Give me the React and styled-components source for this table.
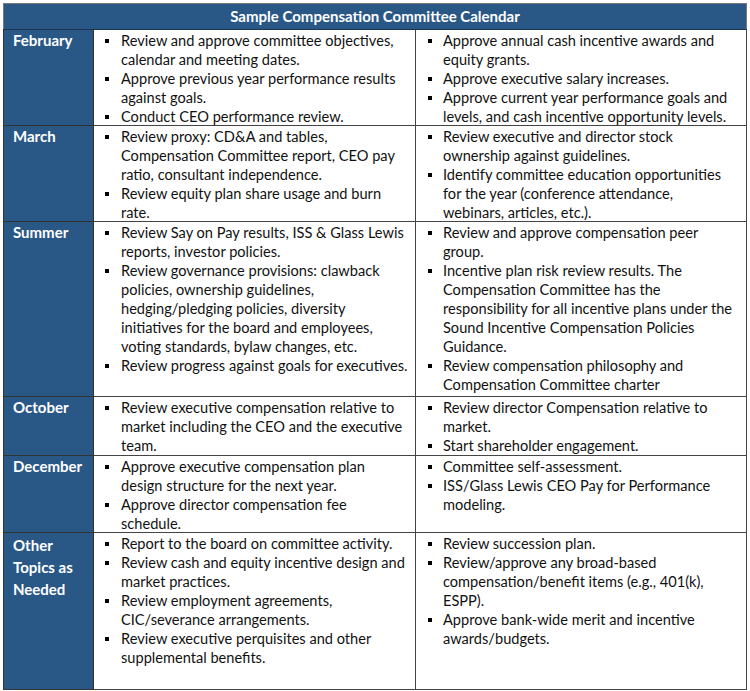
import React from "react";
import styled, { createGlobalStyle } from "styled-components";

const Global = createGlobalStyle`
  html, body { margin: 0; padding: 0; background: #ffffff; }
  body { font-family: Lato, "Open Sans", "Liberation Sans", sans-serif; }
`;

const Page = styled.div`
  padding: 3px 0 0 3px;
`;

const Table = styled.table`
  width: 743px;
  border-collapse: collapse;
  table-layout: fixed;
  border: 1.5px solid #7a7a7a;
  font-size: 14.6px;
  line-height: 19px;
  color: #111;
`;

const HeadCell = styled.th`
  background: #2a5886;
  color: #ffffff;
  font-weight: 700;
  font-size: 15px;
  text-align: center;
  height: 25px;
  padding: 0;
  border-bottom: 1px solid #1d3550;
`;

const Label = styled.td`
  background: #2a5886;
  color: #ffffff;
  font-weight: 700;
  font-size: 15px;
  vertical-align: top;
  padding: 1px 0 0 9px;
  border: 1px solid #333;
  height: ${(p) => p.$h}px;
  box-sizing: border-box;
`;

const ListCell = styled.td`
  vertical-align: top;
  padding: 1px 0 0 0;
  border: 1px solid #444;
`;

const List = styled.ul`
  list-style: none;
  margin: 0 0 -1px;
  padding: 0;
`;

const Item = styled.li`
  position: relative;
  padding-left: ${(p) => p.$indent}px;
  &::before {
    content: "";
    position: absolute;
    left: ${(p) => p.$bullet}px;
    top: 8px;
    width: 4px;
    height: 4px;
    background: #000;
  }
`;

const Line = styled.span`
  display: block;
  white-space: nowrap;
`;

const LabelLine = styled.span`
  display: block;
  line-height: ${(p) => p.$lh || 19}px;
`;

const rows = [
  {
    label: ["February"],
    h: 96,
    left: [
      ["Review and approve committee objectives,", "calendar and meeting dates."],
      ["Approve previous year performance results", "against goals."],
      ["Conduct CEO performance review."],
    ],
    right: [
      ["Approve annual cash incentive awards and", "equity grants."],
      ["Approve executive salary increases."],
      ["Approve current year performance goals and", "levels, and cash incentive opportunity levels."],
    ],
  },
  {
    label: ["March"],
    h: 96,
    left: [
      ["Review proxy: CD&A and tables,", "Compensation Committee report, CEO pay", "ratio, consultant independence."],
      ["Review equity plan share usage and burn", "rate."],
    ],
    right: [
      ["Review executive and director stock", "ownership against guidelines."],
      ["Identify committee education opportunities", "for the year (conference attendance,", "webinars, articles, etc.)."],
    ],
  },
  {
    label: ["Summer"],
    h: 175,
    left: [
      ["Review Say on Pay results, ISS & Glass Lewis", "reports, investor policies."],
      [
        "Review governance provisions: clawback",
        "policies, ownership guidelines,",
        "hedging/pledging policies, diversity",
        "initiatives for the board and employees,",
        "voting standards, bylaw changes, etc.",
      ],
      ["Review progress against goals for executives."],
    ],
    right: [
      ["Review and approve compensation peer", "group."],
      [
        "Incentive plan risk review results.  The",
        "Compensation Committee has the",
        "responsibility for all incentive plans under the",
        "Sound Incentive Compensation Policies",
        "Guidance.",
      ],
      ["Review compensation philosophy and", "Compensation Committee charter"],
    ],
  },
  {
    label: ["October"],
    h: 59,
    left: [["Review executive compensation relative to", "market including the CEO and the executive", "team."]],
    right: [["Review director Compensation relative to", "market."], ["Start shareholder engagement."]],
  },
  {
    label: ["December"],
    h: 76,
    left: [
      ["Approve executive compensation plan", "design structure for the next year."],
      ["Approve director compensation fee", "schedule."],
    ],
    right: [["Committee self-assessment."], ["ISS/Glass Lewis CEO Pay for Performance", "modeling."]],
  },
  {
    label: ["Other", "Topics as", "Needed"],
    lh: 22,
    h: 157,
    left: [
      ["Report to the board on committee activity."],
      ["Review cash and equity incentive design and", "market practices."],
      ["Review employment agreements,", "CIC/severance arrangements."],
      ["Review executive perquisites and other", "supplemental benefits."],
    ],
    right: [
      ["Review succession plan."],
      ["Review/approve any broad-based", "compensation/benefit items (e.g., 401(k),", "ESPP)."],
      ["Approve bank-wide merit and incentive", "awards/budgets."],
    ],
  },
];

function Bullets({ items, bullet }) {
  return (
    <List>
      {items.map((lines, i) => (
        <Item key={i} $indent={27} $bullet={bullet}>
          {lines.map((l, j) => (
            <Line key={j}>{l}</Line>
          ))}
        </Item>
      ))}
    </List>
  );
}

export default function App() {
  return (
    <Page>
      <Global />
      <Table>
        <colgroup>
          <col style={{ width: 90 }} />
          <col style={{ width: 322 }} />
          <col style={{ width: 331 }} />
        </colgroup>
        <thead>
          <tr>
            <HeadCell colSpan={3}>Sample Compensation Committee Calendar</HeadCell>
          </tr>
        </thead>
        <tbody>
          {rows.map((r) => (
            <tr key={r.label.join(" ")}>
              <Label $h={r.h}>
                {r.label.map((l) => (
                  <LabelLine key={l} $lh={r.lh}>
                    {l}
                  </LabelLine>
                ))}
              </Label>
              <ListCell>
                <Bullets items={r.left} bullet={11} />
              </ListCell>
              <ListCell>
                <Bullets items={r.right} bullet={12} />
              </ListCell>
            </tr>
          ))}
        </tbody>
      </Table>
    </Page>
  );
}
